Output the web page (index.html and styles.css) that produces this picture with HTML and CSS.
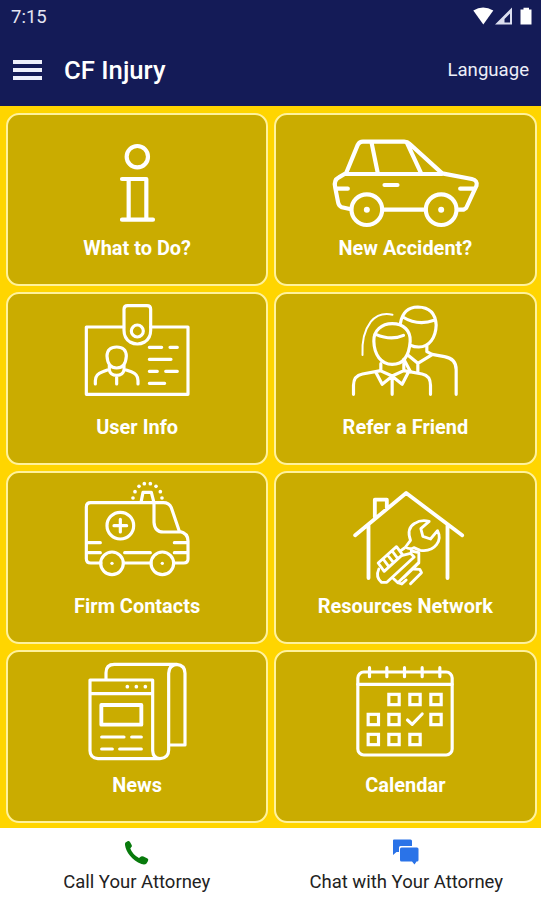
FILE: index.html
```
<!DOCTYPE html>
<html lang="en">
<head>
  <meta charset="UTF-8">
  <meta name="viewport" content="width=device-width, initial-scale=1.0">
  <title>CF Injury</title>
  <link rel="stylesheet" href="styles.css">
</head>
<body>
  <header class="header">
    <div class="status">
      <span class="time">7:15</span>
      <svg class="status-icons" viewBox="0 0 60 20">
        <path fill="#fff" d="M.3 3.5Q10-2.500 20.300 3.500L10.300 17.500Z"/>
        <path fill="#dcdff0" fill-rule="evenodd" d="M22 17.500L39 .5V17.500ZM31.500 15.500H37V6.500L31.500 12Z"/>
        <path fill="#fff" d="M47.500 2.500H50.500V.8H56V2.500H58.500V17.500H47.500Z"/>
      </svg>
    </div>
    <nav class="navbar">
      <button class="menu-btn" aria-label="Menu"><span></span><span></span><span></span></button>
      <h1>CF Injury</h1>
      <a class="language">Language</a>
    </nav>
  </header>

  <main class="grid">
    <a class="tile">
      <svg class="icon bold" viewBox="-54 0 510 330">
        <circle cx="202" cy="110" r="32"/>
        <path d="M156 177H229V299M176 177V299M156 299H249"/>
      </svg>
      <span class="label">What to Do?</span>
    </a>

    <a class="tile">
      <svg class="icon bold" viewBox="-.5 0 510 330">
        <path d="M92 268L65 262Q56 258 54 248L45 202Q40 180 56 172L78 159L113 74Q118 65 128 65H252Q262 65 269 72L366 160L455 177Q473 181 469 197L438 264L430 269H412M190 269H316M78 162H366M154 67L173 160M260 68L303 160M193 195H232M51 206H83M420 206H464"/>
        <circle cx="140" cy="269" r="46"/>
        <circle cx="363" cy="269" r="46"/>
        <circle class="dot" cx="140" cy="269" r="9"/>
        <circle class="dot" cx="363" cy="269" r="9"/>
      </svg>
      <span class="label">New Accident?</span>
    </a>

    <a class="tile">
      <svg class="icon" viewBox="-54 12 510 330">
        <path d="M161 96H49V298H354V96H242"/>
        <path d="M162 43Q162 32 173 32H231Q242 32 242 43V106Q242 130 224 141Q202 153 180 141Q162 130 162 106Z"/>
        <circle cx="202" cy="108" r="18"/>
        <path d="M140 156Q168 156 169 183Q167 219 140 219Q113 219 111 183Q112 156 140 156Z"/>
        <path d="M76 267V257Q76 237 98 230L118 223V211M162 211V223L184 230Q204 237 204 257V267M118 225Q121 241 140 241Q159 241 162 225M140 242V267"/>
        <path d="M238 157H275M300 157H322M238 193H303M238 229H262M287 229H322M238 265H284"/>
      </svg>
      <span class="label">User Info</span>
    </a>

    <a class="tile">
      <svg class="icon" viewBox="-43.500 12 510 330">
        <path d="M173 86C207 86 229 107 227 139C224 181 207 208 173 208C139 208 119 178 118 139C117 106 142 86 173 86Z"/>
        <path d="M124 118Q170 138 207 121M198 84Q206 37 250 36Q302 37 305 90C304 127 285 156 253 156Q238 156 229 151M205 66Q250 94 299 76"/>
        <path class="thin" d="M84 180C82 144 90 105 109 80Q134 50 174 59"/>
        <path d="M57 298V271Q57 242 84 237L139 227V206M208 206V227L263 237Q288 242 288 271V298M137 227L173 243L208 227M124 232L143 268L173 244L203 268L222 231M173 246V298"/>
        <path d="M277 153V170L293 178L330 185Q365 191 365 224V298M219 179L250 205L293 179M250 207V230M208 193L228 230"/>
      </svg>
      <span class="label">Refer a Friend</span>
    </a>

    <a class="tile">
      <svg class="icon" viewBox="-54 18 510 330">
        <path d="M93 273H62Q49 273 49 260V105Q49 92 62 92H280Q297 92 304 107L328 178Q354 183 354 207V261Q354 273 341 273H311M160 273H243M213 91L219 61H244L252 92V151Q254 180 280 180H328"/>
        <circle cx="151" cy="161" r="40"/>
        <path d="M151 142V180M132 161H170M54 212H91M54 242H91M313 212H350M313 242H350M164 242H241"/>
        <circle cx="126" cy="274" r="34"/>
        <circle cx="277" cy="274" r="34"/>
        <circle class="dot" cx="126" cy="274" r="5"/>
        <circle class="dot" cx="277" cy="274" r="5"/>
        <g class="dot">
          <circle cx="189" cy="78" r="5.500"/><circle cx="195" cy="59" r="5.500"/><circle cx="207" cy="43" r="5.500"/>
          <circle cx="223" cy="35" r="5.500"/><circle cx="241" cy="35" r="5.500"/><circle cx="258" cy="43" r="5.500"/>
          <circle cx="271" cy="59" r="5.500"/><circle cx="276" cy="78" r="5.500"/>
        </g>
      </svg>
      <span class="label">Firm Contacts</span>
    </a>

    <a class="tile">
      <svg class="icon" viewBox="31.500 9 510 330">
        <path class="roof" d="M137 181L290 54L458 181M177 151V309M414 151V309M196 126V74H232V98"/>
        <g class="hand">
          <path d="M288 216L303 196Q290 160 316 145Q334 133 359 139L334 161L340 184L363 192L384 167Q396 190 381 209Q364 231 332 226L313 218Q299 225 288 216Z"/>
          <path d="M206 264L261 215L279 239L224 289ZM221 252L238 275M234 240L252 263M248 228L265 251"/>
          <path d="M285 219L274 227M279 241L303 235L314 246L232 322H216Q197 306 208 282M305 228L328 233V262L265 323L250 309M328 264L282 308M312 282L331 283L336 293L303 326M265 323L277 327L290 315"/>
        </g>
      </svg>
      <span class="label">Resources Network</span>
    </a>

    <a class="tile">
      <svg class="icon" viewBox="-54 15 510 330">
        <path d="M60 84H248V296Q249 320 270 320H84Q60 317 60 296ZM60 125H248M108 80V62Q108 37 133 37H320Q345 39 345 64V279H300M270 320Q296 318 296 294V64Q297 39 320 37"/>
        <path class="roof" d="M94 159H214V218H94Z"/>
        <path d="M95 255H162M185 255H214M95 291H127M149 291H214"/>
        <g class="dot"><circle cx="172" cy="104" r="5.500"/><circle cx="199" cy="104" r="5.500"/><circle cx="226" cy="104" r="5.500"/></g>
      </svg>
      <span class="label">News</span>
    </a>

    <a class="tile">
      <svg class="icon" viewBox="-43.500 15 510 330">
        <rect x="70" y="60" width="283" height="249" rx="18"/>
        <path d="M70 97H353M105 47V74M157 47V74M210 47V74M263 47V74M316 47V74"/>
        <g class="days">
          <rect x="163" y="127" width="31" height="31"/><rect x="226" y="127" width="31" height="31"/><rect x="289" y="127" width="31" height="31"/>
          <rect x="101" y="187" width="31" height="31"/><rect x="163" y="187" width="31" height="31"/><rect x="289" y="187" width="31" height="31"/>
          <rect x="101" y="247" width="31" height="31"/><rect x="163" y="247" width="31" height="31"/><rect x="226" y="247" width="31" height="31"/>
        </g>
        <path d="M219 204L233 217L263 186"/>
      </svg>
      <span class="label">Calendar</span>
    </a>
  </main>

  <footer class="footer">
    <a class="action">
      <svg viewBox="0 0 28 28"><path fill="#087a0c" d="M2.500 3.500L5 2Q6 1.500 7 3L8.800 6.300Q9.300 7.500 8 8.500L7.300 9.500Q9.500 15.500 16 19L18 17.500Q19 17 20.500 17.500L24.500 19.500Q25.800 20.300 25 22L23.500 24.500Q22 26 18.500 25C9 21.500 3 13 2 6Q1.800 4 2.500 3.500Z"/></svg>
      <span>Call Your Attorney</span>
    </a>
    <a class="action">
      <svg viewBox="0 0 28 28"><path fill="#2a73e8" d="M2 .5H18.500Q20 .5 20 2V7H8.500Q7 7 7 8.500V13H4.500L1 16V1.500Q1 .5 2 .5ZM9.500 8.500H25Q26.500 8.500 26.500 10V21Q26.500 22.500 25 22.500H24.500L22.500 25.500L20 22.500H9.500Q8 22.500 8 21V10Q8 8.500 9.500 8.500Z"/></svg>
      <span>Chat with Your Attorney</span>
    </a>
  </footer>
</body>
</html>
```
FILE: styles.css
```
:root {
  --navy:#141b57;
  --yellow:#ffd500;
  --gold:#caac00;
}
*{box-sizing:border-box;margin:0;padding:0;}
html,body{height:100%;}
body{
  font-family:Roboto, 'Liberation Sans', sans-serif;
  background:#fff;
  display:flex;
  flex-direction:column;
  overflow:hidden;
}

/* header */
.header{height:106px;background:var(--navy);color:#fff;flex:none;}
.status{display:flex;justify-content:space-between;height:34px;padding:7px 8px 0 11px;}
.time{font-size:18.5px;line-height:20px;color:#e4e6f2;}
.status-icons{width:60px;height:20px;}
.navbar{display:flex;align-items:center;height:71px;padding:0 12px 0 13px;}
.menu-btn{display:flex;flex-direction:column;gap:4px;width:29px;background:none;border:none;margin-right:22px;}
.menu-btn span{height:4px;background:#eef0fb;}
h1{font-size:25.7px;font-weight:500;line-height:30px;}
.language{margin-left:auto;font-size:18.6px;color:#eceef8;}

/* tiles */
.grid{
  height:722px;
  flex:none;
  padding:7px 4.5px 5px 6px;
  background:var(--yellow);
  display:grid;
  grid-template-columns:1fr 1fr;
  grid-auto-rows:173px;
  gap:6px;
}
.tile{
  background:var(--gold);
  border:2px solid #fff29c;
  border-radius:13px;
  display:flex;
  flex-direction:column;
  align-items:center;
  padding-top:5px;
  color:#fff;
}
.icon{width:170px;height:110px;flex:none;fill:none;stroke:#fff;stroke-width:9.5;stroke-linecap:round;stroke-linejoin:round;}
.icon.bold{stroke-width:12.5;}
.icon .roof{stroke-width:11.5;}
.icon .hand{stroke-width:8.5;}
.icon .thin{stroke-width:6;}
.icon .days{stroke-linejoin:miter;}
.icon .dot{fill:#fff;stroke:none;}
.label{font-size:19.95px;font-weight:700;line-height:24px;margin-top:6px;white-space:nowrap;}

/* bottom actions */
.footer{flex:1;display:flex;padding-left:2px;}
.action{flex:1;display:flex;flex-direction:column;align-items:center;padding-top:11px;color:#222;font-size:18.5px;}
.action svg{width:28px;height:28px;}
.action span{line-height:22px;margin-top:4px;}
```
